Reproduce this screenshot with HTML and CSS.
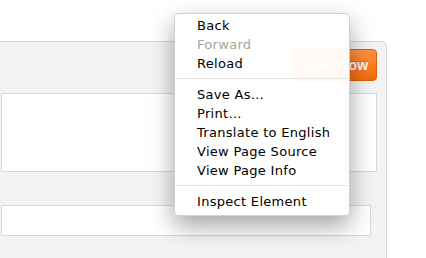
FILE: index.html
```html
<!DOCTYPE html>
<html lang="en">
<head>
  <meta charset="UTF-8">
  <meta name="viewport" content="width=device-width, initial-scale=1.0">
  <title>Editor</title>
  <link rel="stylesheet" href="styles.css">
</head>
<body>
  <div class="panel">
    <div class="panel-head">
      <button class="save-btn">Save Now</button>
    </div>
    <div class="editor"></div>
    <div class="field-row">
      <input type="text" class="field">
    </div>
  </div>

  <div class="context-menu">
    <div class="menu-item">Back</div>
    <div class="menu-item disabled">Forward</div>
    <div class="menu-item">Reload</div>
    <div class="menu-sep"></div>
    <div class="menu-item">Save As…</div>
    <div class="menu-item">Print…</div>
    <div class="menu-item">Translate to English</div>
    <div class="menu-item">View Page Source</div>
    <div class="menu-item">View Page Info</div>
    <div class="menu-sep"></div>
    <div class="menu-item">Inspect Element</div>
  </div>
</body>
</html>
```

FILE: styles.css
```css
body {
  margin: 0;
  padding: 41px 0 0 0;
  background-color: #FFFFFF;
  font-family: "DejaVu Sans", sans-serif;
  overflow: hidden;
  height: 258px;
  box-sizing: border-box;
}

.panel {
  margin-left: -20px;
  width: 407px;
  height: 217px;
  box-sizing: border-box;
  padding: 7px 9px 0 20px;
  background-color: #F3F3F3;
  border: 1px solid #D6D6D6;
  border-bottom: none;
  border-radius: 0 6px 0 0;
}

.panel-head {
  display: flex;
  justify-content: flex-end;
}

.save-btn {
  width: 84px;
  height: 32px;
  padding: 0;
  font-family: "Liberation Sans", Arial, sans-serif;
  font-size: 14px;
  font-weight: bold;
  color: #FFFFFF;
  text-shadow: 0 -1px 0 rgba(160, 60, 0, 0.5);
  background: linear-gradient(#FF9345, #F56A0C);
  border: 1px solid #E05F08;
  border-radius: 4px;
}

.editor {
  margin-top: 12px;
  height: 79px;
  box-sizing: border-box;
  background-color: #FFFFFF;
  border: 1px solid #D8D8D8;
}

.field-row {
  margin-top: 33px;
  padding-right: 6px;
}

.field {
  display: block;
  width: 100%;
  height: 31px;
  box-sizing: border-box;
  margin: 0;
  background-color: #FFFFFF;
  border: 1px solid #D8D8D8;
}

/* context menu floating over the page */
.context-menu {
  position: absolute;
  left: 174px;
  top: 13px;
  width: 176px;
  box-sizing: border-box;
  padding: 2px 0 4px 0;
  background-color: rgba(255, 255, 255, 0.95);
  border: 1px solid rgba(0, 0, 0, 0.18);
  border-radius: 5px;
  box-shadow: 0 10px 24px rgba(0, 0, 0, 0.36);
}

.menu-item {
  height: 19px;
  line-height: 19px;
  padding-left: 22px;
  font-size: 13px;
  letter-spacing: 0.3px;
  color: #000000;
  white-space: nowrap;
}

.menu-item.disabled {
  color: #A3A3A3;
}

.menu-sep {
  height: 1px;
  margin: 5px 1px 6px 1px;
  background-color: #E2E2E2;
}
```
